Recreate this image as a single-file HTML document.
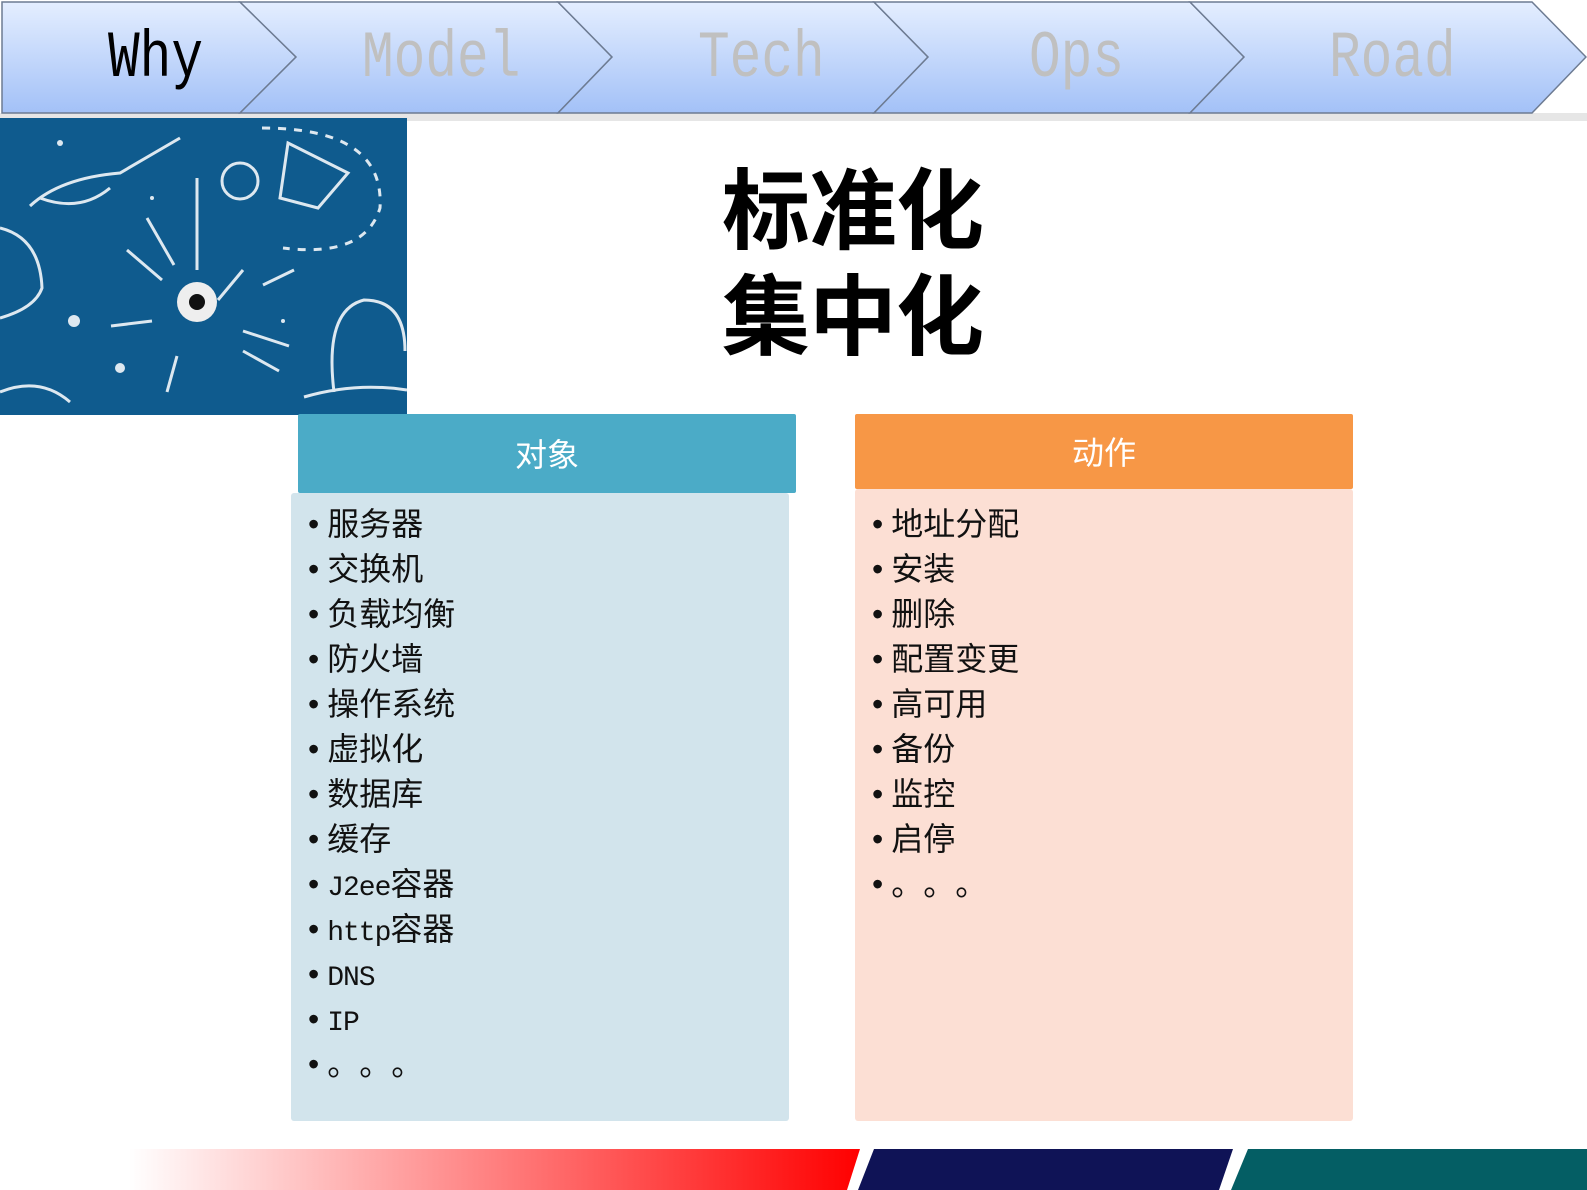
<!DOCTYPE html>
<html><head><meta charset="utf-8"><style>
body{margin:0;width:1587px;height:1190px;overflow:hidden;background:#fff;position:relative;font-family:"Liberation Sans","Noto Sans CJK SC",sans-serif}
.abs{position:absolute}
.tab{position:absolute;top:22px;font-family:"Liberation Mono",monospace;font-size:66px;color:#c0c0c0;transform:scaleX(0.8);transform-origin:left top;line-height:74px}
.title{left:722px;top:152px;font-family:"Noto Sans CJK SC",sans-serif;font-size:88px;line-height:106px;font-weight:bold;color:#000;letter-spacing:-1px}
.hdr{color:#fff;font-size:32px;text-align:center;line-height:78px;font-family:"Noto Sans CJK SC",sans-serif}
ul{list-style:none;margin:0;padding:0;position:absolute;font-size:32px;color:#111;font-family:"Noto Sans CJK SC",sans-serif}
li{height:45px;line-height:45px;white-space:nowrap;overflow:visible}
li:before{content:"•";margin-right:8px;font-family:"Liberation Sans"}
.m{font-family:"Liberation Mono",monospace;font-size:28px;letter-spacing:-1px;line-height:1}
.d{letter-spacing:16px;font-family:"Noto Sans CJK JP",sans-serif}
</style></head><body>
<svg class="abs" style="left:0;top:0" width="1587" height="125">
<defs><linearGradient id="g" x1="0" y1="0" x2="0" y2="1"><stop offset="0" stop-color="#e4eeff"/><stop offset="1" stop-color="#a3c1f7"/></linearGradient></defs>
<rect x="0" y="113" width="1587" height="8" fill="#e6e6e6"/>
<path d="M2 2H240L296 57L240 113H2Z" fill="url(#g)" stroke="#6d7b92" stroke-width="1.5"/>
<path d="M240 2H558L612 57L558 113H240L296 57Z" fill="url(#g)" stroke="#6d7b92" stroke-width="1.5"/>
<path d="M558 2H874L928 57L874 113H558L612 57Z" fill="url(#g)" stroke="#6d7b92" stroke-width="1.5"/>
<path d="M874 2H1190L1244 57L1190 113H874L928 57Z" fill="url(#g)" stroke="#6d7b92" stroke-width="1.5"/>
<path d="M1190 2H1532L1586 57L1532 113H1190L1244 57Z" fill="url(#g)" stroke="#6d7b92" stroke-width="1.5"/>
</svg>
<div class="tab" style="left:108px;color:#000">Why</div>
<div class="tab" style="left:362px">Model</div>
<div class="tab" style="left:698px">Tech</div>
<div class="tab" style="left:1029px">Ops</div>
<div class="tab" style="left:1329px">Road</div>

<svg class="abs" style="left:0;top:118px" width="407" height="297">
<rect width="407" height="297" fill="#0f5b8e"/>
<g fill="none" stroke="#dde8f0" stroke-width="3">
<path d="M30 88 Q60 60 120 55 L180 20 M40 80 Q80 95 110 70"/>
<circle cx="240" cy="63" r="18"/>
<path d="M288 25 L348 55 L318 90 L280 80Z"/>
<path d="M262 10 Q385 10 380 90 Q365 140 283 130" stroke-dasharray="8 8"/>
<path d="M0 110 Q40 120 42 170 Q35 190 0 200"/>
<path d="M334 274 Q324 192 364 182 Q405 182 405 233 M304 279 Q355 264 407 272"/>
<path d="M0 274 Q40 258 70 284"/>
<path d="M197 60V152 M147 100L174 147 M127 132L162 162 M243 152L218 182 M294 152L263 167 M111 208L152 203 M243 213L289 228 M243 233L279 253 M177 238L167 274"/>
</g>
<circle cx="197" cy="184" r="20" fill="#eee"/><circle cx="197" cy="184" r="8" fill="#111"/>
<g fill="#dde8f0"><circle cx="60" cy="25" r="3"/><circle cx="74" cy="203" r="6"/><circle cx="120" cy="250" r="5"/><circle cx="152" cy="80" r="2"/><circle cx="283" cy="203" r="2"/></g>
</svg>

<div class="abs title">标准化<br>集中化</div>

<div class="abs hdr" style="left:298px;top:414px;width:498px;height:79px;background:#4babc7;border-radius:2px">对象</div>
<div class="abs" style="left:291px;top:493px;width:498px;height:628px;background:#d2e4ec;border-radius:3px"></div>
<ul style="left:308px;top:500px">
<li>服务器</li><li>交换机</li><li>负载均衡</li><li>防火墙</li><li>操作系统</li><li>虚拟化</li><li>数据库</li><li>缓存</li><li><span class="m">J2ee</span>容器</li><li><span class="m">http</span>容器</li><li><span class="m">DNS</span></li><li><span class="m">IP</span></li><li><span class="d">。。。</span></li>
</ul>

<div class="abs hdr" style="left:855px;top:414px;width:498px;height:75px;background:#f79746;border-radius:2px;line-height:75px">动作</div>
<div class="abs" style="left:855px;top:489px;width:498px;height:632px;background:#fcdfd4;border-radius:3px"></div>
<ul style="left:872px;top:500px">
<li>地址分配</li><li>安装</li><li>删除</li><li>配置变更</li><li>高可用</li><li>备份</li><li>监控</li><li>启停</li><li><span class="d">。。。</span></li>
</ul>

<svg class="abs" style="left:0;top:1149px" width="1587" height="41">
<defs><linearGradient id="r" x1="0" x2="1"><stop offset="0" stop-color="#fff"/><stop offset="0.15" stop-color="#fff"/><stop offset="1" stop-color="#ff0000"/></linearGradient></defs>
<path d="M0 0H860L847 41H0Z" fill="url(#r)"/>
<path d="M874 0H1233L1219 41H858Z" fill="#0f1356"/>
<path d="M1248 0H1587V41H1231Z" fill="#045e64"/>
</svg>
</body></html>
